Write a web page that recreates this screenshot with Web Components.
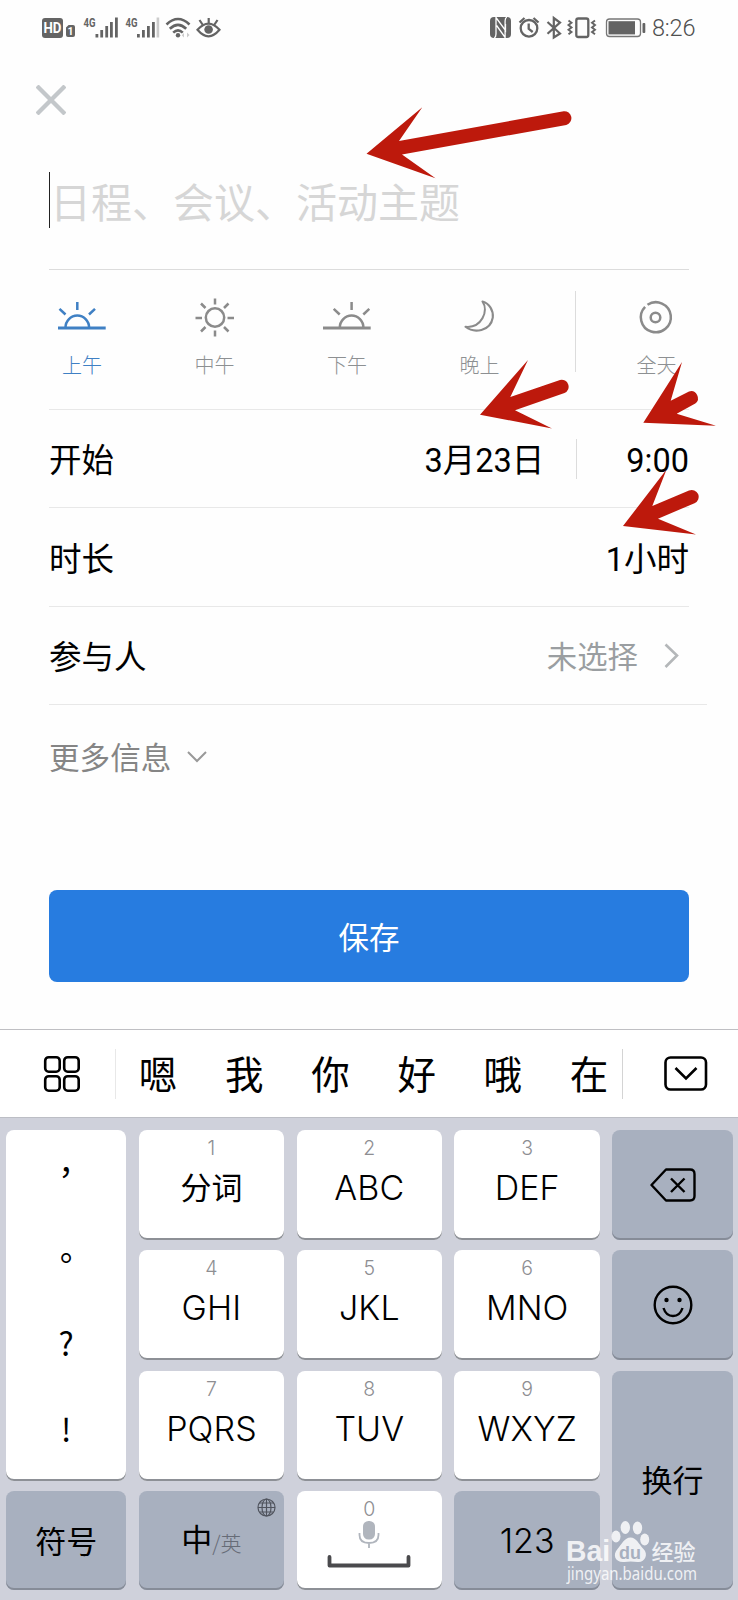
<!DOCTYPE html>
<html lang="zh-CN">
<head>
<meta charset="utf-8">
<title>新建日程</title>
<style>
html,body{margin:0;padding:0}
body{width:738px;height:1600px;overflow:hidden;background:#fefefe;color:#000;font-family:Roboto,"Noto Sans CJK SC",sans-serif}
</style>
</head>
<body>
<schedule-app></schedule-app>
<script>
function define(name, html){
  const t=document.createElement('template');
  t.innerHTML=html;
  customElements.define(name, class extends HTMLElement{
    constructor(){super();this.attachShadow({mode:'open'}).appendChild(t.content.cloneNode(true));}
  });
}

define('status-bar', `
<style>
:host{display:flex;height:56px;box-sizing:border-box;padding:0 43px 0 0;justify-content:space-between;color:#646464}
svg{display:block}
.right{display:flex}
time{font:300 23.5px/56px Roboto,sans-serif;width:43px;white-space:nowrap;color:#505050;letter-spacing:-.2px}
</style>
<svg width="240" height="56" viewBox="0 0 240 56" fill="#646464">
  <rect x="42" y="18" width="21" height="20" rx="3"/>
  <text x="43.500" y="33" font-family="Roboto" font-size="14" font-weight="700" fill="#fff" textLength="18" lengthAdjust="spacingAndGlyphs">HD</text>
  <path d="M66 27.500l2.600-2.500H73a2 2 0 0 1 2 2v8a2 2 0 0 1-2 2h-5a2 2 0 0 1-2-2z"/>
  <text x="70.600" y="34.800" font-family="Roboto" font-size="10.500" font-weight="700" fill="#fff" text-anchor="middle">1</text>
  <text x="83.500" y="27" font-family="Roboto" font-size="13.500" font-weight="700" textLength="12" lengthAdjust="spacingAndGlyphs">4G</text>
  <path d="M95.500 34h2.800v3.500h-2.800zM100.300 30h2.800v7.500h-2.800zM105.300 26h2.800v11.500h-2.800zM110 22h2.800v15.500h-2.800zM115 17.500h2.800v20H115z"/>
  <text x="125.500" y="27" font-family="Roboto" font-size="13.500" font-weight="700" textLength="12" lengthAdjust="spacingAndGlyphs">4G</text>
  <path d="M137 34h2.800v3.500H137zM142 30h2.800v7.500H142zM147 26h2.800v11.500H147zM152 22h2.800v15.500H152z"/>
  <path d="M156.600 17.500h2.600v20h-2.600z" fill="#ccc"/>
  <g fill="none" stroke="#646464" stroke-width="2.600"><path d="M166.500 24.500q11.500-11 23 0M169.800 28.800q8.200-8 16.400 0M173.200 32.600q4.800-4.600 9.600 0"/></g>
  <circle cx="178" cy="35.300" r="2.200"/>
  <path d="M184 33v4.500l-2.300-2.300zM187 32.500v5l2.600-2.500z" fill="#ccc"/>
  <g fill="none" stroke="#646464" stroke-width="2.200"><path d="M197.500 29.800q11-12.500 22 0q-11 13-22 0zM208.700 23v-5M202.500 24.500l-3-4.500M214.500 24.500l3-4.500"/></g>
  <circle cx="208.600" cy="29.500" r="4.300"/>
</svg>
<div class="right">
<svg width="164" height="56" viewBox="488 0 164 56" fill="#646464">
  <path d="M494 17h13q4 0 4 4v13q0 4-4 4h-13q-4 0-4-4V21q0-4 4-4z"/>
  <path d="M494.300 38q1.700-1 1.700-4V17.500l9.500 13V24M506.800 17q-1.700 1-1.700 4v16.500l-8.500-12" fill="none" stroke="#fff" stroke-width="1.300"/>
  <g fill="none" stroke="#646464" stroke-width="2.300"><circle cx="529" cy="28.300" r="8.300"/><path d="M528.700 23.500v5.300l4 3.200M519.500 22.500l5-4.500M538.500 22.500l-5-4.500"/>
  <path d="M547.500 22l12.500 11.500-6.200 4V18l6.200 4.500-12.500 11.300" stroke-width="2.200"/>
  <rect x="576.300" y="18.500" width="12" height="18.500" rx="2"/>
  <path d="M568.500 20.500l3 2.300-3 2.300 3 2.300-3 2.300 3 2.300-3 2.300M595 20.500l-3 2.300 3 2.300-3 2.300 3 2.300-3 2.300 3 2.300" stroke-width="1.900"/></g>
  <rect x="606.500" y="19" width="34" height="17.500" rx="3" fill="none" stroke="#777" stroke-width="1.300"/>
  <rect x="608.500" y="21.200" width="26.500" height="13.200"/>
  <rect x="642.500" y="23" width="2.800" height="10" rx="1"/>
</svg><time>8:26</time></div>
`);

define('title-field', `
<style>
:host{display:flex;height:97px;border-bottom:1px solid #dcdcdc;align-items:flex-start}
i{width:1px;height:56px;background:#222}
span{font:400 41px/60px "Noto Sans CJK SC",sans-serif;color:#d6d6d6;margin:-2.500px 0 0 0;white-space:nowrap}
</style><i></i><span><slot></slot></span>`);

define('period-tab', `
<style>
:host{display:flex;flex-direction:column;align-items:center;width:60px;color:#8d9092}
:host([active]){color:#3f80c4}
::slotted(svg){display:block;height:58px;width:60px}
span{font:300 20px/30px "Noto Sans CJK SC",sans-serif;margin-top:4px}
</style><slot name="icon"></slot><span><slot></slot></span>`);

define('period-tabs', `
<style>
:host{display:flex;height:140px;border-bottom:1px solid #e8e8e8;box-sizing:border-box;padding:18px 0 0 3px}
.set{display:flex;gap:72.500px}
.rule{width:1px;height:81px;margin:3px 51px 0 65px;background:#dcdcdc}
svg{fill:none;stroke:#8b8b8b;stroke-width:2.500}
</style>
<div class="set">
<period-tab active><svg slot="icon" viewBox="0 0 60 58" style="stroke:#3f80c4"><path d="M6 40h47.700" stroke-width="2.800"/><path d="M13.500 39.500a11.800 12 0 0 1 23.600 0M25.300 22v-8M13.500 26.500l-6-5.700M37 26.500l6-5.700"/></svg>上午</period-tab>
<period-tab><svg slot="icon" viewBox="0 0 60 58"><circle cx="30" cy="29.500" r="9.200"/><path d="M30 16.500V10.500M30 48.500v-6M17 30h-6.500M49 30h-6.500M20.500 20L16 15.500M39 20l4.500-4.500M20.500 39L16 43.500M39 39l4.500 4.500"/></svg>中午</period-tab>
<period-tab><svg slot="icon" viewBox="0 0 60 58"><path d="M6 40h47.700" stroke-width="2.800"/><path d="M22.800 39.500a11.800 12 0 0 1 23.600 0M34.600 22v-8M22.700 26.500l-6-5.700M46.300 26.500l6-5.700"/></svg>下午</period-tab>
<period-tab><svg slot="icon" viewBox="0 0 60 58"><path d="M32.500 13.500C39 23 31.500 40.500 15.500 38.800C24 45.500 40.500 43.500 42.800 29.500C43.500 22.500 39.500 15.500 32.500 13.500z" stroke-width="2.100" stroke-linejoin="round"/></svg>晚上</period-tab>
</div>
<div class="rule"></div>
<period-tab><svg slot="icon" viewBox="0 0 60 58"><path d="M20.500 16.800a15 15 0 1 1-2.400 2"/><circle cx="28.500" cy="29.500" r="4.800"/></svg>全天</period-tab>
`);

define('form-row', `
<style>
:host{display:flex;justify-content:space-between;align-items:center;box-sizing:border-box;height:98px;border-bottom:1px solid #e8e8e8;font-size:32.500px;line-height:48px;white-space:nowrap}
.v{display:flex;align-items:center}
::slotted(span:not(.rule)){position:relative;top:2.500px}
</style><span><slot name="label"></slot></span><span class="v"><slot></slot></span>`);

define('save-button', `
<style>
:host{display:block}
button{display:block;width:100%;height:92px;margin:0;padding:0;border:0;border-radius:8px;background:#277ce0;color:#fff;font:400 30.500px/92px "Noto Sans CJK SC",sans-serif}
</style><button><slot></slot></button>`);

define('event-form', `
<style>
:host{display:block;padding:0 49px;height:973px}
header{height:116px;box-sizing:border-box;padding-top:29px;margin-left:-13px}
svg{display:block;fill:none}
.rule{width:1px;height:40px;background:#dcdcdc;margin:0 49px 0 32px}
.muted{color:#9a9ea1;font-size:30.400px}
.chev{margin:0 10px 0 26px}
.last{width:658px}
.last .chev{margin-right:28px}
.more{display:flex;align-items:center;height:102px;color:#858585;font-size:30.600px;gap:16px}
.more svg{margin-top:2px}
save-button{margin-top:83px}
</style>
<header><svg width="30" height="30" viewBox="0 0 30 30"><path d="M1 1l28 28M29 1L1 29" stroke="#c3c7ca" stroke-width="4.300"/></svg></header>
<title-field>日程、会议、活动主题</title-field>
<period-tabs></period-tabs>
<form-row><span slot="label">开始</span><span>3月23日</span><span class="rule"></span><span>9:00</span></form-row>
<form-row style="height:99px"><span slot="label">时长</span><span>1小时</span></form-row>
<form-row class="last"><span slot="label">参与人</span><span class="muted">未选择</span><svg class="chev" width="15" height="26" viewBox="0 0 15 26"><path d="M1.500 1.500L13 12.500 1.500 24" stroke="#b4b7b9" stroke-width="2.600"/></svg></form-row>
<div class="more"><span>更多信息</span><svg width="20" height="12" viewBox="0 0 20 12"><path d="M1 1l9 9 9-9" stroke="#999" stroke-width="2"/></svg></div>
<save-button>保存</save-button>
`);

define('candidate-bar', `
<style>
:host{display:flex;box-sizing:border-box;height:88px;border-top:1px solid #bfbfc3;background:#fff;align-items:center}
svg{display:block;fill:none;stroke:#000;stroke-width:2.600}
.rule{width:1px;height:50px;background:#d4d4d4}
.rule.soft{background:#e8e8e8}
.words{display:flex;width:506px;font:400 38.500px/56px "Noto Sans CJK SC",sans-serif;margin:-4px 0 0 -1px;padding-right:1px;box-sizing:content-box}
.words span{width:86.200px;flex:none;text-align:center}
</style>
<svg width="115" height="60" viewBox="0 0 115 60"><g><rect x="45.200" y="13.200" width="14.500" height="14.500" rx="3.500"/><rect x="64.200" y="13.200" width="14.500" height="14.500" rx="3.500"/><rect x="45.200" y="32.200" width="14.500" height="14.500" rx="3.500"/><rect x="64.200" y="32.200" width="14.500" height="14.500" rx="3.500"/></g></svg>
<div class="rule soft"></div>
<div class="words"><span>嗯</span><span>我</span><span>你</span><span>好</span><span>哦</span><span>在</span></div>
<div class="rule"></div>
<svg width="115" height="60" viewBox="623 0 115 60"><rect x="665.500" y="13.500" width="40.500" height="32" rx="5"/><path d="M675.500 24l10.500 10.500L696.500 24"/></svg>
`);

define('key-cap', `
<style>
:host{display:flex;flex-direction:column;align-items:center;box-sizing:border-box;border-radius:8px;background:#fff;box-shadow:inset 0 -2px 0 #8d9096;min-width:0;font:350 34px/44px Inter,"Noto Sans CJK SC",sans-serif;overflow:hidden;letter-spacing:.1px}
:host([dark]){background:#a8b0bf;box-shadow:inset 0 -2px 0 #868c98;justify-content:center}
.hint{font-size:19.500px;font-weight:300;line-height:24px;color:#8e8e92;margin:6px 0 6px}
:host([dark]) .hint{display:none}
</style><span class="hint"><slot name="hint"></slot></span><slot></slot>`);

define('key-pad', `
<style>
:host{display:grid;box-sizing:border-box;height:483px;padding:12px 5px 10px 6px;background:#cfd1db;border-top:1px solid #bcbec5;grid-template-columns:120.300px 145.500px 145.500px 145.500px 120.300px;grid-template-rows:110px 110px 110px 99px;gap:10.400px 12.400px}
svg{display:block;fill:none;stroke:#000;stroke-width:2.400}
.cn{font:400 31px/44px "Noto Sans CJK SC",sans-serif;letter-spacing:0;margin-top:-2px}
.punct{grid-row:span 3}
.punct .list{display:flex;flex-direction:column;margin-top:-15px;font:400 32px/86px "Noto Sans CJK TC",sans-serif}
.punct .list span{text-align:center;height:86px}
.enter{grid-row:span 2}
.lang{position:relative;display:flex;align-items:baseline;width:100%;justify-content:center}
.lang small{font-size:21px;font-weight:300;color:#666b76}
.lang svg{position:absolute;right:8px;top:-18px;stroke:#50545e;stroke-width:1.200}
.space{margin-top:-8px}
</style>
<key-cap class="punct"><div class="list" lang="zh-TW"><span>，</span><span>。</span><span>?</span><span>!</span></div></key-cap>
<key-cap><span slot="hint">1</span><span class="cn">分词</span></key-cap>
<key-cap><span slot="hint">2</span>ABC</key-cap>
<key-cap><span slot="hint">3</span>DEF</key-cap>
<key-cap dark><svg width="46" height="34" viewBox="0 0 46 34"><path d="M16 1.500h24q4.500 0 4.500 4.500v22q0 4.500-4.500 4.500H16L1.500 17z" stroke-linejoin="round"/><path d="M21 10.500l13.500 13.500M34.500 10.500L21 24"/></svg></key-cap>
<key-cap><span slot="hint">4</span>GHI</key-cap>
<key-cap><span slot="hint">5</span>JKL</key-cap>
<key-cap><span slot="hint">6</span>MNO</key-cap>
<key-cap dark><svg width="40" height="40" viewBox="0 0 40 40"><circle cx="20" cy="20" r="18.300"/><path d="M10.500 23q2.500 8 9.500 8t9.500-8"/><circle cx="13.500" cy="15" r="2.200" fill="#000" stroke="none"/><circle cx="26.500" cy="15" r="2.200" fill="#000" stroke="none"/></svg></key-cap>
<key-cap><span slot="hint">7</span>PQRS</key-cap>
<key-cap><span slot="hint">8</span>TUV</key-cap>
<key-cap><span slot="hint">9</span>WXYZ</key-cap>
<key-cap dark class="enter"><span class="cn">换行</span></key-cap>
<key-cap dark><span class="cn">符号</span></key-cap>
<key-cap dark><span class="cn lang">中<small>/英</small><svg width="19" height="19" viewBox="0 0 19 19"><circle cx="9.500" cy="9.500" r="8.500"/><ellipse cx="9.500" cy="9.500" rx="4.500" ry="8.500"/><path d="M9.500 1v17M1 9.500h17M2.500 5h14M2.500 14h14"/></svg></span></key-cap>
<key-cap><span slot="hint">0</span><svg class="space" width="84" height="50" viewBox="0 0 84 50"><rect x="36" y="2" width="12" height="18.500" rx="5.500" fill="#b0b5bd" stroke="none"/><path d="M32.500 14v2q0 8 9.500 8t9.500-8v-2M42 24v5" stroke="#b0b5bd" stroke-width="1.800"/><path d="M2.500 38v8.500h79V38" stroke="#4a4a4d" stroke-width="3.800" stroke-linecap="round" stroke-linejoin="round"/></svg></key-cap>
<key-cap dark>123</key-cap>
`);

define('red-arrows', `
<style>:host{position:absolute;left:0;top:0;pointer-events:none}svg{display:block;fill:#bd190c}</style>
<svg width="738" height="600" viewBox="0 0 738 600">
<path d="M366.500 153.700L422.300 107.300 399 141 563.700 111.200a7 7 0 0 1 2.600 13.700L402 154.500 435.500 178.300z"/>
<path d="M480 414.700L528 360 510.300 397 560 380a6.900 6.900 0 0 1 4.500 13L515 410.300 552 428.500z"/>
<path d="M643.300 422.700L682 362 670.700 400.700 689 391.500a6.900 6.900 0 0 1 6.300 12L676.700 413.700 716 425.700z"/>
<path d="M623 526L666.500 469.500 652.300 506 689 490.500a6.900 6.900 0 0 1 5.500 12.700L658 518.700 696 534.500z"/>
</svg>`);

define('site-watermark', `
<style>
:host{position:absolute;left:560px;top:1515px;pointer-events:none}
svg{display:block;fill:#fff;opacity:.82}
</style>
<svg width="150" height="75" viewBox="560 1515 150 75">
<text x="566" y="1561" font-family="Liberation Sans" font-weight="700" font-size="30" textLength="44" lengthAdjust="spacingAndGlyphs">Bai</text>
<ellipse cx="616" cy="1536.500" rx="4.500" ry="6"/><ellipse cx="625.300" cy="1527.500" rx="4.700" ry="6.500"/><ellipse cx="637.500" cy="1528" rx="4.700" ry="6.500"/><ellipse cx="644.700" cy="1539.500" rx="4.500" ry="6"/>
<path d="M630.500 1537.500c6 0 8.500 7 13 11.500 5.500 5.500 1 14-6 13q-7-1-13 0c-9 1-12.500-7-7-13 4-4.500 7-11.500 13-11.500z"/>
<text x="630" y="1558.500" text-anchor="middle" font-family="Liberation Sans" font-weight="700" font-size="18" style="fill:#a8b0bf">du</text>
<text x="651.500" y="1559.500" font-family="Noto Sans CJK SC" font-weight="500" font-size="22" textLength="44">经验</text>
<text x="567" y="1579.500" font-family="Noto Sans" font-size="17.500" textLength="130" lengthAdjust="spacingAndGlyphs">jingyan.baidu.com</text>
</svg>`);

define('schedule-app', `
<style>:host{display:block;position:relative;width:738px;height:1600px;overflow:hidden}</style>
<status-bar></status-bar>
<event-form></event-form>
<candidate-bar></candidate-bar>
<key-pad></key-pad>
<red-arrows></red-arrows>
<site-watermark></site-watermark>
`);
</script>
</body>
</html>
